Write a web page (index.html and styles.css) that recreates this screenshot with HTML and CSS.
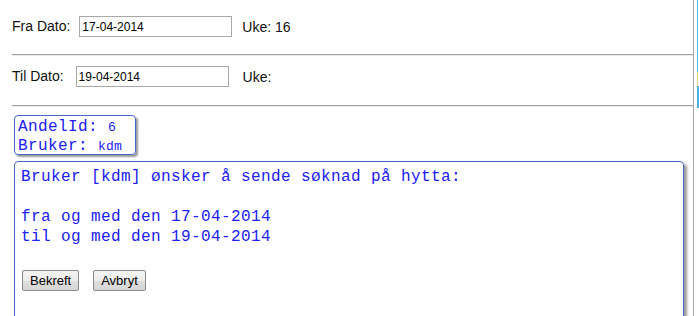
FILE: index.html
```html
<!DOCTYPE html>
<html>
<head>
<meta charset="utf-8">
<link rel="stylesheet" href="styles.css">
</head>
<body>
<div class="page">
  <div class="main">
    <div class="row row-fra">
      <span class="lbl">Fra Dato:</span>
      <input class="date" type="text" value="17-04-2014">
      <span class="uke">Uke: 16</span>
    </div>
    <hr class="sep">
    <div class="row row-til">
      <span class="lbl">Til Dato:</span>
      <input class="date" type="text" value="19-04-2014">
      <span class="uke">Uke:</span>
    </div>
    <hr class="sep sep-2">
    <div class="info">
      <div class="info-line">AndelId: <span class="val">6</span></div>
      <div class="info-line">Bruker: <span class="val">kdm</span></div>
    </div>
    <div class="dialog">
      <div class="msg">Bruker [kdm] ønsker å sende søknad på hytta:</div>
      <div class="msg">&nbsp;</div>
      <div class="msg">fra og med den 17-04-2014</div>
      <div class="msg">til og med den 19-04-2014</div>
      <div class="actions">
        <button class="btn">Bekreft</button>
        <button class="btn">Avbryt</button>
      </div>
    </div>
  </div>
  <div class="strip">
    <div class="strip-bar">
      <div class="strip-thin"></div>
      <div class="strip-yellow"></div>
      <div class="strip-thick"></div>
    </div>
  </div>
</div>
</body>
</html>
```
FILE: styles.css
```css
html, body {
  margin: 0;
  padding: 0;
  background: #ffffff;
  overflow: hidden;
}
.page {
  display: flex;
  height: 316px;
  width: 699px;
}
.main {
  width: 682px;
  padding-left: 12px;
  font-family: "Liberation Sans", Arial, sans-serif;
  font-size: 14px;
  color: #111;
}
.row {
  display: flex;
  align-items: center;
  height: 21px;
}
.row-fra {
  margin-top: 16px;
  margin-bottom: 17px;
}
.row-til {
  margin-top: 10px;
  margin-bottom: 18px;
}
.lbl {
  line-height: 21px;
}
.date {
  box-sizing: border-box;
  width: 153px;
  height: 21px;
  border: 1px solid #a9a9a9;
  padding: 0 0 0 2px;
  margin: 0;
  font-family: "Liberation Sans", Arial, sans-serif;
  font-size: 12px;
  color: #000;
  background: #fff;
  outline: none;
}
.row-fra .date { margin-left: 9px; }
.row-til .date { margin-left: 12px; }
.row-fra .uke { margin-left: 10px; }
.row-til .uke { margin-left: 14px; }
.sep {
  margin: 0;
  height: 0;
  border: 0;
  border-top: 1px solid #a0a0a0;
  border-bottom: 1px solid #ececec;
}
.info {
  margin-top: 8px;
  margin-left: 2px;
  box-sizing: border-box;
  width: 122px;
  height: 40px;
  border: 1px solid #4a66c8;
  border-radius: 4px;
  box-shadow: 2px 2px 2px #9a9a9a;
  padding: 2px 0 0 3px;
  font-family: "Liberation Mono", "Courier New", monospace;
  font-size: 16px;
  letter-spacing: 0.4px;
  color: #2020f0;
}
.info-line {
  line-height: 18px;
  white-space: pre;
}
.val {
  font-size: 13px;
  letter-spacing: 0.2px;
}
.dialog {
  margin-top: 6px;
  margin-left: 2px;
  box-sizing: border-box;
  width: 670px;
  height: 200px;
  border: 1px solid #4a66c8;
  border-radius: 4px;
  box-shadow: 3px 3px 3px #9a9a9a;
  padding: 5px 0 0 6px;
  font-family: "Liberation Mono", "Courier New", monospace;
  font-size: 16px;
  letter-spacing: 0.4px;
  color: #2020f0;
}
.msg {
  line-height: 20px;
  white-space: pre;
}
.actions {
  display: flex;
  gap: 14px;
  margin-top: 23px;
  margin-left: 1px;
}
.btn {
  box-sizing: border-box;
  height: 21px;
  padding: 0 7px;
  margin: 0;
  font-family: "Liberation Sans", Arial, sans-serif;
  font-size: 13px;
  letter-spacing: 0;
  color: #000;
  border: 1px solid #8a8a8a;
  border-radius: 2px;
  background: linear-gradient(#f4f4f4 0%, #ececec 50%, #dedede 51%, #d6d6d6 100%);
}
.strip {
  width: 5px;
  border-left: 1px solid #a8a8a8;
  display: flex;
  justify-content: flex-end;
}
.strip-bar {
  width: 2px;
  display: flex;
  flex-direction: column;
}
.strip-thin {
  height: 72px;
  width: 1px;
  background: #5ab4e0;
}
.strip-yellow {
  height: 14px;
  width: 1px;
  background: #f0d070;
}
.strip-thick {
  height: 22px;
  width: 2px;
  background: #4ab0e4;
}
```
